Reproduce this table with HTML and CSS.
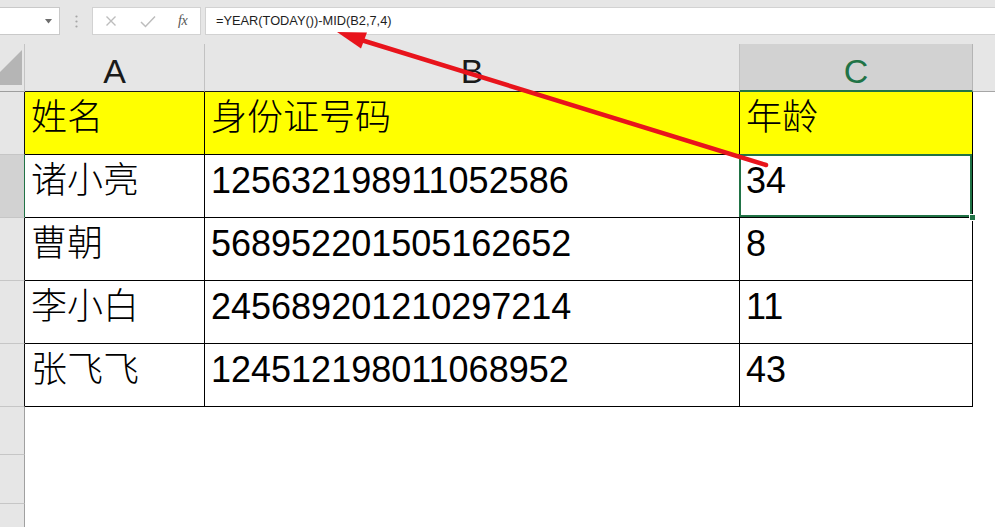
FILE: index.html
```html
<!DOCTYPE html>
<html lang="zh-CN">
<head>
<meta charset="utf-8">
<title>Excel 年龄计算</title>
<link rel="stylesheet" href="styles.css">
</head>
<body>
<div class="app">
  <div class="toolbar">
    <div class="namebox">
      <svg class="dd" width="7" height="5" viewBox="0 0 7 5"><path d="M0 0H7L3.5 4.5Z" fill="#6d6d6d"/></svg>
    </div>
    <div class="grip">
      <svg width="3" height="13" viewBox="0 0 3 13"><circle cx="1.5" cy="1.5" r="1.1" fill="#a6a6a6"/><circle cx="1.5" cy="6.5" r="1.1" fill="#a6a6a6"/><circle cx="1.5" cy="11.5" r="1.1" fill="#a6a6a6"/></svg>
    </div>
    <div class="fbtns">
      <svg class="ic" width="12" height="12" viewBox="0 0 12 12"><path d="M1.5 1.5L10.5 10.5M10.5 1.5L1.5 10.5" stroke="#bdbdbd" stroke-width="1.4" fill="none"/></svg>
      <svg class="ic" width="16" height="13" viewBox="0 0 16 13"><path d="M1 7L5.5 11.5L15 1.5" stroke="#bdbdbd" stroke-width="1.5" fill="none"/></svg>
      <span class="fx">fx</span>
    </div>
    <div class="formula">=YEAR(TODAY())-MID(B2,7,4)</div>
  </div>

  <div class="sheet">
    <div class="corner">
      <svg width="24" height="47" viewBox="0 0 24 47"><path d="M22 6V41H0V28Z" fill="#b5b5b5"/></svg>
    </div>
    <div class="colhead">A</div>
    <div class="colhead">B</div>
    <div class="colhead sel">C</div>
    <div class="colhead rest"></div>

    <div class="rowhead"></div>
    <div class="cell yellow">姓名</div>
    <div class="cell yellow">身份证号码</div>
    <div class="cell yellow">年龄</div>
    <div class="empty"></div>

    <div class="rowhead sel"></div>
    <div class="cell">诸小亮</div>
    <div class="cell">125632198911052586</div>
    <div class="cell active">34</div>
    <div class="empty"></div>

    <div class="rowhead"></div>
    <div class="cell">曹朝</div>
    <div class="cell">568952201505162652</div>
    <div class="cell">8</div>
    <div class="empty"></div>

    <div class="rowhead"></div>
    <div class="cell">李小白</div>
    <div class="cell">245689201210297214</div>
    <div class="cell">11</div>
    <div class="empty"></div>

    <div class="rowhead"></div>
    <div class="cell">张飞飞</div>
    <div class="cell">124512198011068952</div>
    <div class="cell">43</div>
    <div class="empty"></div>

    <div class="rowhead plain"></div>
    <div class="blank"></div>
    <div class="rowhead plain"></div>
    <div class="blank"></div>
    <div class="rowhead plain"></div>
    <div class="blank"></div>
  </div>

  <svg class="arrow" width="995" height="527" viewBox="0 0 995 527">
    <line x1="766" y1="165" x2="358" y2="39" stroke="#e8141c" stroke-width="4.5" stroke-linecap="round"/>
    <path d="M337 32L367 32.5L361 48.5Z" fill="#e8141c"/>
  </svg>
</div>
</body>
</html>
```

FILE: styles.css
```css
html, body {
  margin: 0;
  padding: 0;
  width: 995px;
  height: 527px;
  overflow: hidden;
  background: #ffffff;
}

.app {
  position: relative;
  width: 995px;
  height: 527px;
  overflow: hidden;
  font-family: "Liberation Sans", "Noto Sans CJK SC", sans-serif;
}

/* ---------- formula toolbar ---------- */
.toolbar {
  height: 44px;
  box-sizing: border-box;
  padding-top: 7px;
  background: #e6e6e6;
  display: flex;
  align-items: flex-start;
}

.namebox {
  width: 61px;
  height: 28px;
  margin-left: -1px;
  box-sizing: border-box;
  background: #fff;
  border: 1px solid #c9c9c9;
  display: flex;
  align-items: center;
  justify-content: flex-end;
  padding-right: 7px;
}

.grip {
  width: 32px;
  height: 28px;
  display: flex;
  align-items: center;
  justify-content: center;
}

.fbtns {
  width: 109px;
  height: 28px;
  box-sizing: border-box;
  background: #fff;
  border: 1px solid #d2d2d2;
  display: flex;
  align-items: center;
  padding-left: 12px;
}

.fbtns .ic:first-child {
  margin-right: 23px;
}

.fbtns .ic + .ic {
  margin-right: 22px;
}

.fx {
  font-family: "Liberation Serif", serif;
  font-style: italic;
  font-size: 14px;
  color: #555;
  letter-spacing: -0.5px;
}

.formula {
  flex: 1;
  margin-left: 4px;
  margin-right: -2px;
  height: 28px;
  box-sizing: border-box;
  background: #fff;
  border: 1px solid #d2d2d2;
  padding-left: 10px;
  font-size: 12.8px;
  line-height: 26px;
  color: #1e1e1e;
}

/* ---------- sheet grid ---------- */
.sheet {
  display: grid;
  grid-template-columns: 25px 180px 535px 233px 1fr;
  grid-template-rows: 48px repeat(5, 63px) 48px 49px 49px;
}

.corner {
  background: #e6e6e6;
  border-right: 1px solid #c4c4c4;
  border-bottom: 1px solid #9e9e9e;
  box-sizing: border-box;
}

.corner svg {
  display: block;
}

.colhead {
  background: #e6e6e6;
  box-sizing: border-box;
  border-right: 1px solid #c2c2c2;
  border-bottom: 1px solid #1a1a1a;
  text-align: center;
  font-size: 34px;
  line-height: 38px;
  padding-top: 8px;
  color: #1a1a1a;
}

.colhead.sel {
  background: #d2d2d2;
  color: #217346;
  border-bottom: 2px solid #217346;
  border-right-color: #b4b4b4;
}

.colhead.rest {
  border-right: none;
  border-bottom-color: #a6a6a6;
}

.rowhead {
  background: #e6e6e6;
  box-sizing: border-box;
  border-right: 1px solid #111;
  border-bottom: 1px solid #c6c6c6;
}

.rowhead.sel {
  background: #d2d2d2;
  border-right: 1px solid #217346;
}

.rowhead.plain {
  border-right-color: #a0a0a0;
}

.cell {
  position: relative;
  box-sizing: border-box;
  border-right: 1px solid #000;
  border-bottom: 1px solid #000;
  padding: 6px 0 0 6px;
  font-size: 36px;
  font-weight: 300;
  line-height: 40px;
  color: #000;
  white-space: nowrap;
}

.cell.yellow {
  background: #ffff00;
}

.cell.active::after {
  content: "";
  position: absolute;
  left: -1px;
  top: -1px;
  right: 0;
  bottom: 0;
  border: 2px solid #217346;
}

.cell.active::before {
  content: "";
  position: absolute;
  right: -4px;
  bottom: -4px;
  width: 5px;
  height: 5px;
  background: #217346;
  border: 1px solid #fff;
  z-index: 2;
}

.empty {
  background: #fff;
}

.blank {
  grid-column: 2 / 6;
  background: #fff;
}

/* ---------- annotation arrow ---------- */
.arrow {
  position: absolute;
  left: 0;
  top: 0;
  pointer-events: none;
}
```
